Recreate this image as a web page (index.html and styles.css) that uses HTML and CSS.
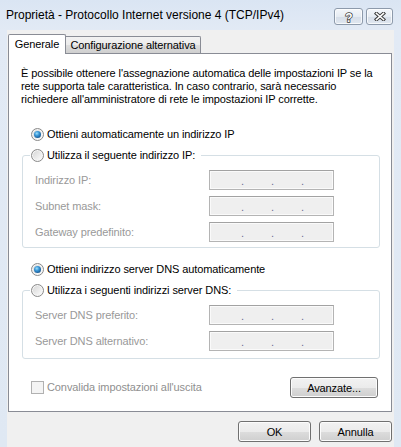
FILE: index.html
```html
<!DOCTYPE html>
<html lang="it">

<head>
    <meta charset="UTF-8">
    <meta name="viewport" content="width=device-width, initial-scale=1.0">
    <title>Proprietà - Protocollo Internet versione 4 (TCP/IPv4)</title>
    <link rel="stylesheet" href="styles.css">
</head>

<body>
    <div class="window">
        <div class="titlebar">
            <span class="caption">Proprietà - Protocollo Internet versione 4 (TCP/IPv4)</span>
            <div class="caption-btns">
                <button class="cap-btn cap-help">
                    <svg width="10" height="12" viewBox="0 0 10 12">
                        <text x="5" y="10.5" text-anchor="middle" class="help-glyph">?</text>
                    </svg>
                </button>
                <button class="cap-btn cap-close">
                    <svg width="12" height="9" viewBox="0 0 12 9">
                        <path d="M2.5 1.5 L9.5 7.5 M9.5 1.5 L2.5 7.5" stroke="#3c3c3c" stroke-width="3.6" stroke-linecap="square"/>
                        <path d="M2.5 1.5 L9.5 7.5 M9.5 1.5 L2.5 7.5" stroke="#ffffff" stroke-width="1.6" stroke-linecap="square"/>
                    </svg>
                </button>
            </div>
        </div>

        <div class="client">
            <div class="tabs">
                <div class="tab tab-active">Generale</div>
                <div class="tab tab-alt">Configurazione alternativa</div>
            </div>

            <div class="panel">
                <p class="intro">È possibile ottenere l'assegnazione automatica delle impostazioni IP se la<br>rete supporta tale caratteristica. In caso contrario, sarà necessario<br>richiedere all'amministratore di rete le impostazioni IP corrette.</p>

                <label class="option option-top"><span class="radio radio-checked"></span>Ottieni automaticamente un indirizzo IP</label>

                <fieldset class="group group-ip">
                    <legend><label class="option"><span class="radio"></span>Utilizza il seguente indirizzo IP:</label></legend>
                    <div class="field">
                        <span class="field-label">Indirizzo IP:</span>
                        <span class="ip-box"><i>.</i><i>.</i><i>.</i></span>
                    </div>
                    <div class="field">
                        <span class="field-label">Subnet mask:</span>
                        <span class="ip-box"><i>.</i><i>.</i><i>.</i></span>
                    </div>
                    <div class="field">
                        <span class="field-label">Gateway predefinito:</span>
                        <span class="ip-box"><i>.</i><i>.</i><i>.</i></span>
                    </div>
                </fieldset>

                <label class="option option-dns"><span class="radio radio-checked"></span>Ottieni indirizzo server DNS automaticamente</label>

                <fieldset class="group group-dns">
                    <legend><label class="option"><span class="radio"></span>Utilizza i seguenti indirizzi server DNS:</label></legend>
                    <div class="field">
                        <span class="field-label">Server DNS preferito:</span>
                        <span class="ip-box"><i>.</i><i>.</i><i>.</i></span>
                    </div>
                    <div class="field">
                        <span class="field-label">Server DNS alternativo:</span>
                        <span class="ip-box"><i>.</i><i>.</i><i>.</i></span>
                    </div>
                </fieldset>

                <div class="panel-foot">
                    <label class="option option-disabled"><span class="checkbox"></span>Convalida impostazioni all'uscita</label>
                    <button class="btn btn-adv">Avanzate...</button>
                </div>
            </div>

            <div class="dialog-btns">
                <button class="btn btn-ok">OK</button>
                <button class="btn">Annulla</button>
            </div>
        </div>
    </div>
</body>

</html>
```

FILE: styles.css
```css
* {
    margin: 0;
    padding: 0;
    box-sizing: border-box;
}

html,
body {
    width: 401px;
    height: 447px;
    overflow: hidden;
}

body {
    background: linear-gradient(#dae5f3, #e2eaf5 30px, #dfe8f3);
    font-family: "Liberation Sans", Arial, sans-serif;
    font-size: 11px;
    letter-spacing: -0.1px;
    color: #000;
}

.window {
    height: 447px;
    display: flex;
    flex-direction: column;
}

/* title bar */
.titlebar {
    height: 30px;
    display: flex;
    justify-content: space-between;
    align-items: flex-start;
    padding: 0 8px 0 6px;
}

.caption {
    font-size: 12px;
    line-height: 14px;
    letter-spacing: 0;
    padding-top: 8px;
}

.caption-btns {
    display: flex;
    gap: 3px;
    padding-top: 8px;
}

.cap-btn {
    height: 17px;
    border: 1px solid #8d9aab;
    border-radius: 3px;
    background: linear-gradient(#f4f7fb, #e6ecf3 50%, #d6dee9 51%, #e0e7f0);
    box-shadow: inset 0 0 0 1px rgba(255, 255, 255, 0.75);
    display: flex;
    align-items: center;
    justify-content: center;
}

.cap-help {
    width: 29px;
}

.cap-close {
    width: 27px;
}

.help-glyph {
    font-family: "Liberation Sans", Arial, sans-serif;
    font-size: 12px;
    font-weight: bold;
    fill: #fff;
    stroke: #3c3c3c;
    stroke-width: 1.5px;
    paint-order: stroke;
}

/* client area */
.client {
    flex: 1;
    background: #f0f0f0;
    margin: 0 7px;
    padding: 4px 2px 0 1px;
}

.tabs {
    display: flex;
    align-items: flex-end;
    height: 19px;
}

.tab {
    border: 1px solid #898c95;
    border-bottom: none;
    text-align: center;
}

.tab-active {
    width: 58px;
    height: 20px;
    line-height: 19px;
    background: #fff;
    margin-bottom: -1px;
    position: relative;
    z-index: 1;
    border-radius: 2px 2px 0 0;
}

.tab-alt {
    width: 135px;
    height: 17px;
    line-height: 16px;
    border-left: none;
    background: linear-gradient(#f2f2f2, #ebebeb 50%, #dddddd 51%, #cfcfcf);
    border-radius: 0 2px 0 0;
}

.panel {
    background: #fff;
    border: 1px solid #898c95;
    padding: 13px 0 13px 0;
}

.intro {
    line-height: 13px;
    padding-left: 12px;
}

/* radio / checkbox rows */
.option {
    display: flex;
    align-items: center;
    gap: 3px;
    height: 13px;
    line-height: 13px;
    white-space: nowrap;
}

.option-top {
    margin: 22px 0 0 22px;
}

.option-dns {
    margin: 15px 0 0 22px;
}

.option-disabled {
    color: #8f8f8f;
    margin-left: 22px;
}

.radio {
    position: relative;
    flex: 0 0 13px;
    width: 13px;
    height: 13px;
    border-radius: 50%;
    border: 1px solid #8a8a8a;
    background: linear-gradient(135deg, #d3d3d3, #f2f2f2 70%, #ffffff);
    box-shadow: inset 0 0 0 1px #f6f6f6;
}

.radio-checked::after {
    content: "";
    position: absolute;
    left: 2px;
    top: 2px;
    width: 7px;
    height: 7px;
    border-radius: 50%;
    background: radial-gradient(circle at 40% 35%, #9ee0fb 0, #3b98d8 35%, #14528c 80%);
}

.checkbox {
    flex: 0 0 13px;
    width: 13px;
    height: 13px;
    border: 1px solid #b1b1b1;
    background: #f4f4f4;
}

/* group boxes */
.group {
    border: 1px solid #d5dfe5;
    border-radius: 3px;
    margin: 8px 11px 0 13px;
    padding: 8px 0 5px 12px;
}

.group legend {
    margin-left: -5px;
    padding: 0 6px 0 1px;
}

.group-dns {
    padding-bottom: 7px;
}

.field {
    display: flex;
    align-items: center;
    height: 20px;
    color: #999;
}

.field + .field {
    margin-top: 6px;
}

.field-label {
    flex: 0 0 174px;
}

.ip-box {
    display: flex;
    width: 125px;
    height: 20px;
    padding: 4px 0 0 31px;
    background: #efefef;
    border: 1px solid #b4b4b4;
    border-top-color: #a2a2a2;
    box-shadow: inset 0 0 0 1px #fafafa;
    color: #6c6c94;
}

.ip-box i {
    font-style: normal;
    width: 30px;
}

.panel-foot {
    display: flex;
    justify-content: space-between;
    align-items: center;
    height: 21px;
    margin: 18px 13px 0 0;
}

/* push buttons */
.btn {
    height: 21px;
    width: 73px;
    border: 1px solid #707070;
    border-radius: 3px;
    background: linear-gradient(#f2f2f2, #ebebeb 50%, #dddddd 51%, #cfcfcf);
    box-shadow: inset 0 0 0 1px #fcfcfc;
    font-family: inherit;
    font-size: 11px;
    letter-spacing: -0.1px;
    color: #000;
}

.btn-adv {
    width: 88px;
}

.dialog-btns {
    display: flex;
    justify-content: flex-end;
    gap: 8px;
    margin-top: 9px;
}
```
